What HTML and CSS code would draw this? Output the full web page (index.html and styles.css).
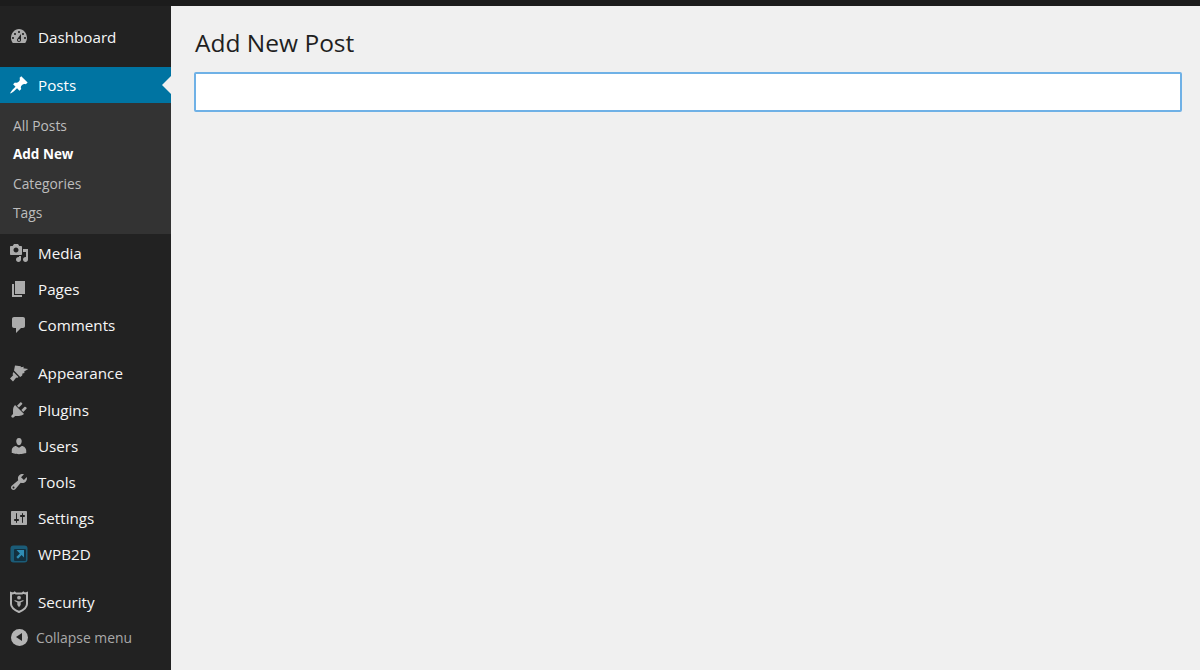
FILE: index.html
```html
<!DOCTYPE html>
<html lang="en">
<head>
<meta charset="utf-8">
<title>Add New Post</title>
<link rel="stylesheet" href="styles.css">
</head>
<body>
<div class="topbar"></div>
<div class="layout">
  <nav class="sidebar">
    <ul class="menu">
      <li class="item"><svg class="icon" viewBox="0 0 20 20"><path class="f" d="M3.760 16h12.480c1.100-1.430 1.760-3.210 1.760-5.140 0-4.530-3.580-8.860-8-8.860s-8 4.330-8 8.860c0 1.930.66 3.710 1.760 5.140zM10 4c.55 0 1 .45 1 1s-.45 1-1 1-1-.45-1-1 .45-1 1-1zM6 6c.55 0 1 .45 1 1s-.45 1-1 1-1-.45-1-1 .45-1 1-1zm8 0c.55 0 1 .45 1 1s-.45 1-1 1-1-.45-1-1 .45-1 1-1zm-5.370 5.550L12 7v6c0 1.100-.9 2-2 2s-2-.9-2-2c0-.57.24-1.080.63-1.450zM4 10c.55 0 1 .45 1 1s-.45 1-1 1-1-.45-1-1 .45-1 1-1zm12 0c.55 0 1 .45 1 1s-.45 1-1 1-1-.45-1-1 .45-1 1-1zm-5 3c0-.55-.45-1-1-1s-1 .45-1 1 .45 1 1 1 1-.45 1-1z" fill-rule="evenodd"/></svg><span>Dashboard</span></li>
      <li class="item current"><svg class="icon" viewBox="0 0 20 20"><path fill="#fff" d="M10.440 3.020l1.820-1.820 6.360 6.350-1.830 1.820c-1.050-.68-2.480-.57-3.410.36l-.75.75c-.92.93-1.040 2.350-.35 3.410l-1.830 1.820-2.410-2.410-2.800 2.790c-.42.42-3.380 2.710-3.800 2.290s1.860-3.390 2.280-3.810l2.790-2.790L4.100 9.200l1.830-1.820c1.050.69 2.480.57 3.400-.36l.75-.75c.93-.92 1.050-2.350.36-3.400z"/></svg><span>Posts</span></li>
      <li>
        <ul class="submenu">
          <li class="subitem">All Posts</li>
          <li class="subitem active">Add New</li>
          <li class="subitem">Categories</li>
          <li class="subitem">Tags</li>
        </ul>
      </li>
      <li class="item"><svg class="icon" viewBox="0 0 20 20"><path class="f" fill-rule="evenodd" d="M13 11V4c0-.55-.45-1-1-1h-1.670L9 1H5L3.670 3H2c-.55 0-1 .45-1 1v7c0 .55.45 1 1 1h10c.55 0 1-.45 1-1zM7 4.500c1.380 0 2.500 1.120 2.500 2.500S8.380 9.500 7 9.500 4.500 8.380 4.500 7 5.620 4.500 7 4.500zM14 6h5v10.500c0 1.380-1.120 2.500-2.500 2.500S14 17.880 14 16.500s1.120-2.500 2.500-2.500c.17 0 .34.020.5.050V9h-3V6zm-4 8.050V13h2v3.500c0 1.380-1.120 2.500-2.500 2.500S7 17.880 7 16.500 8.120 14 9.500 14c.17 0 .34.020.5.050z"/></svg><span>Media</span></li>
      <li class="item"><svg class="icon" viewBox="0 0 20 20"><path class="f" d="M6 15V2h10v13H6zm-1 1h8v2H3V5h2v11z"/></svg><span>Pages</span></li>
      <li class="item"><svg class="icon" viewBox="0 0 20 20"><path class="f" d="M5 2h9c1.100 0 2 .9 2 2v7c0 1.100-.9 2-2 2h-2l-5 5v-5H5c-1.100 0-2-.9-2-2V4c0-1.100.9-2 2-2z"/></svg><span>Comments</span></li>
      <li class="sep"></li>
      <li class="item"><svg class="icon" viewBox="0 0 20 20"><path class="f" d="M6 2.500l6 .8-.5 1 3.500-.5-.8 1.400 5 .8-4 2.500.3 1.500-2 .4-.3 2-2 1.500L5 7.500zM4.500 9l5 5-1.500 1-.7-.6L4 18.500 1 15.500 4.300 12l-.8-.8z"/></svg><span>Appearance</span></li>
      <li class="item"><svg class="icon" viewBox="0 0 20 20"><path class="f" d="M13.110 4.360L9.870 7.600 8 5.730l3.240-3.240c.35-.34 1.050-.2 1.560.32.520.51.660 1.210.310 1.550zm-8 1.770l.91-1.120 9.010 9.010-1.190.84c-.71.710-2.630 1.160-3.820 1.160H6.140L4.900 17.260c-.59.590-1.540.59-2.120 0-.59-.58-.59-1.530 0-2.120l1.240-1.240v-3.880c0-1.130.4-3.190 1.090-3.890zm7.260 3.970l3.240-3.240c.34-.35 1.040-.21 1.550.31.520.51.660 1.210.320 1.560l-3.240 3.240z"/></svg><span>Plugins</span></li>
      <li class="item"><svg class="icon" viewBox="0 0 20 20"><path class="f" d="M10 9.250c-2.270 0-2.730-3.440-2.730-3.440C7 4.020 7.820 2 9.970 2c2.160 0 2.980 2.020 2.710 3.810 0 0-.41 3.440-2.680 3.440zm0 2.570L12.720 10c2.390 0 4.520 2.330 4.520 4.530v2.490s-3.650 1.130-7.240 1.130c-3.650 0-7.240-1.130-7.240-1.130v-2.490c0-2.250 1.940-4.480 4.150-4.480z"/></svg><span>Users</span></li>
      <li class="item"><svg class="icon" viewBox="0 0 20 20"><path class="f" fill-rule="evenodd" d="M16.680 9.770c-1.340 1.340-3.300 1.670-4.950.99l-5.410 6.520c-.99.990-2.590.990-3.580 0s-.99-2.590 0-3.570l6.520-5.420c-.68-1.650-.35-3.610.99-4.950 1.280-1.280 3.120-1.620 4.720-1.060l-2.890 2.890 2.820 2.820 2.860-2.870c.53 1.580.18 3.400-1.080 4.650zM3.810 16.210c.4.390 1.040.39 1.430 0 .4-.4.400-1.040 0-1.440-.39-.39-1.030-.39-1.430 0-.39.4-.39 1.040 0 1.440z"/></svg><span>Tools</span></li>
      <li class="item"><svg class="icon" viewBox="0 0 20 20"><path class="f" fill-rule="evenodd" d="M18 16V4c0-.55-.45-1-1-1H3c-.55 0-1 .45-1 1v12c0 .55.45 1 1 1h14c.55 0 1-.45 1-1zM8 11h1c.55 0 1 .45 1 1s-.45 1-1 1H8v1.500c0 .28-.22.5-.5.5s-.5-.22-.5-.5V13H6c-.55 0-1-.45-1-1s.45-1 1-1h1V5.500c0-.28.22-.5.5-.5s.5.220.5.500V11zm5-2h-1c-.55 0-1-.45-1-1s.45-1 1-1h1V5.500c0-.28.22-.5.5-.5s.5.220.5.500V7h1c.55 0 1 .45 1 1s-.45 1-1 1h-1v5.500c0 .28-.22.5-.5.5s-.5-.22-.5-.5V9z"/></svg><span>Settings</span></li>
      <li class="item"><svg class="icon" viewBox="0 0 20 20"><rect x="1.500" y="1.500" width="17" height="17" rx="3" fill="#1b5c78"/><rect x="5" y="5" width="12" height="12" rx="1" fill="#13303f"/><path fill="#2f8db5" d="M7.500 6H15v7.500l-2.400-2.400-3.600 3.600-1.700-1.700 3.600-3.600z"/></svg><span>WPB2D</span></li>
      <li class="sep"></li>
      <li class="item"><svg class="icon shield" viewBox="0 0 20 20"><path fill="none" stroke="#b4b4b4" stroke-width="2" d="M2 1c1.500.6 2.700.5 3.700-.4l1.200 1h6.200l1.200-1c1 .9 2.200 1 3.700.4v11c0 3.500-3.500 6-8 8-4.500-2-8-4.500-8-8z"/><circle class="f" cx="10" cy="5.700" r="1.900"/><path class="f" d="M5.700 7.900l3.500 1.300h1.600l3.500-1.300.3 1.200-2.900 1.500v2.400l-1.700 2.300-1.700-2.300v-2.400L5.400 9.100z"/></svg><span>Security</span></li>
      <li class="collapse"><span class="collapse-btn"><span class="arrow"></span></span><span>Collapse menu</span></li>
    </ul>
  </nav>
  <main class="content">
    <h1 class="title">Add New Post</h1>
    <input class="post-title" type="text" aria-label="Title">
  </main>
</div>
</body>
</html>
```
FILE: styles.css
```css
* { box-sizing: border-box; }
html, body { margin: 0; height: 100%; overflow: hidden; }
body {
  background: #f0f0f0;
  font-family: "Open Sans", "Liberation Sans", sans-serif;
  display: flex;
  flex-direction: column;
}
ul { list-style: none; margin: 0; padding: 0; }
.topbar { height: 6px; background: #1c1c1c; flex: none; }
.layout { flex: 1; display: flex; min-height: 0; }
.sidebar { width: 171px; background: #222; flex: none; padding-top: 13px; }
.item {
  height: 36.2px;
  display: flex;
  align-items: center;
  gap: 9px;
  padding-left: 9px;
  color: #f6f6f6;
  font-size: 15.2px;
  position: relative;
}
.item.current { background: #0074a2; color: #fff; height: 36px; margin-top: 12px; }
.item.current::after {
  content: "";
  position: absolute;
  right: 0;
  top: 9px;
  border: 9px solid transparent;
  border-left: 0;
  border-right-color: #f0f0f0;
}
.icon { width: 20px; height: 20px; flex: none; }
.shield { overflow: visible; }
.f { fill: #ababab; }
.submenu { background: #333; padding: 7.5px 0 7.5px; margin-bottom: 0.5px; }
.subitem {
  height: 29px;
  line-height: 29px;
  padding-left: 13px;
  font-size: 13.8px;
  color: #bdbdbd;
}
.subitem.active { color: #fff; font-weight: 700; font-size: 13.5px; }
.sep { height: 12px; }
.collapse {
  display: flex;
  align-items: center;
  gap: 8px;
  height: 33px;
  padding-left: 11px;
  color: #a9a9a9;
  font-size: 13.9px;
}
.collapse-btn {
  width: 17px;
  height: 17px;
  border-radius: 50%;
  background: #b4b4b4;
  display: flex;
  align-items: center;
  justify-content: center;
  flex: none;
}
.arrow {
  border: 4.5px solid transparent;
  border-left: 0;
  border-right: 6px solid #222;
  margin-right: 2px;
}
.content { flex: 1; padding: 18px 18px 0 23px; min-width: 0; }
.title {
  margin: 0 0 10px;
  font-size: 24.5px;
  font-weight: 400;
  line-height: 38px;
  color: #1f1f1f;
  padding-left: 1px;
}
.post-title {
  display: block;
  width: 100%;
  height: 40px;
  border: 2px solid #6fb1e6;
  border-radius: 2px;
  background: #fff;
  outline: none;
}
```
